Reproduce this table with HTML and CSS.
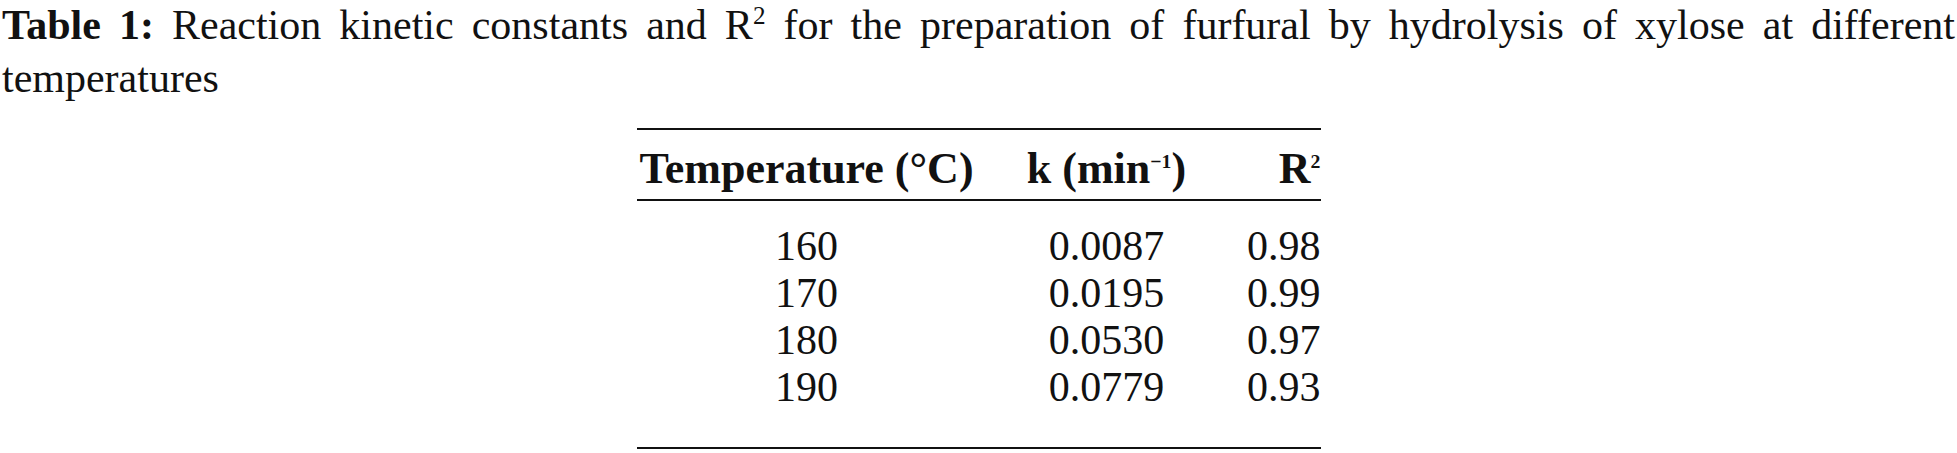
FILE: index.html
```html
<!DOCTYPE html>
<html lang="en">
<head>
  <meta charset="UTF-8" />
  <meta name="viewport" content="width=device-width, initial-scale=1.0" />
  <title>Table 1 – Reaction kinetic constants</title>
  <link rel="stylesheet" href="styles.css">
</head>
<body>
  <p class="caption"><strong>Table 1:</strong> Reaction kinetic constants and R<sup class="sq">2</sup> for the preparation of furfural by hydrolysis of xylose at different temperatures</p>

  <table class="kinetics">
    <colgroup>
      <col class="c-temp">
      <col class="c-k">
      <col class="c-r">
    </colgroup>
    <thead>
      <tr>
        <th class="center">Temperature (°C)</th>
        <th class="center">k (min<sup class="exp">−1</sup>)</th>
        <th class="right">R<sup class="exp">2</sup></th>
      </tr>
    </thead>
    <tbody>
      <tr><td class="center">160</td><td class="center">0.0087</td><td class="right">0.98</td></tr>
      <tr><td class="center">170</td><td class="center">0.0195</td><td class="right">0.99</td></tr>
      <tr><td class="center">180</td><td class="center">0.0530</td><td class="right">0.97</td></tr>
      <tr><td class="center">190</td><td class="center">0.0779</td><td class="right">0.93</td></tr>
    </tbody>
  </table>
</body>
</html>
```

FILE: styles.css
```css
body { margin: 0; background: #fff; color: #111; font-family: "Liberation Serif", "Times New Roman", serif; }

.caption { margin: -1px 2px 0 2px; font-size: 42px; line-height: 53px; text-align: justify; }
.caption strong { font-weight: bold; }
.sq { font-size: 0.6em; vertical-align: 0.6em; line-height: 0; }

.kinetics { margin: 23px auto 0; width: 684px; border-collapse: collapse; table-layout: fixed; border-top: 2px solid #111; border-bottom: 2px solid #111; }
.c-temp { width: 340px; }
.c-k { width: 260px; }
.c-r { width: 84px; }

th, td { padding: 0; white-space: nowrap; }
th { font-size: 44px; font-weight: bold; line-height: 45px; padding: 16px 0 8px; border-bottom: 2px solid #111; }
td { font-size: 42px; line-height: 47px; }
tbody tr:first-child td { padding-top: 22px; }
tbody tr:last-child td { padding-bottom: 36px; }

.center { text-align: center; }
.right { text-align: right; }
.exp { font-size: 0.45em; vertical-align: 0.75em; line-height: 0; }
```
